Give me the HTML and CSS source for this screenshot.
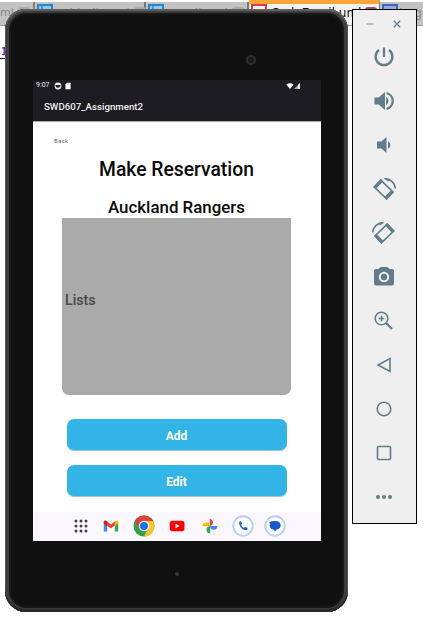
FILE: index.html
```html
<!DOCTYPE html>
<html lang="en">
<head>
<meta charset="utf-8">
<title>SWD607_Assignment2</title>
<link rel="stylesheet" href="styles.css">
</head>
<body>
<div class="editor">
  <div class="tabs">
    <div class="tab first"><span>ml</span><i class="close"></i></div>
    <div class="tab second"><i class="disk"></i><span>AddEdit.uml</span><i class="close"></i></div>
    <div class="tab third"><i class="disk"></i><span>Email.uml</span><i class="close"></i></div>
    <div class="tab active"><i class="disk red"></i><span>CodeEmail.uml</span><i class="close"></i></div>
    <div class="tab last"><i class="disk navy"></i><span>Img</span></div>
  </div>
  <div class="code">1</div>
</div>

<main class="device">
  <i class="camera"></i>
  <section class="screen">
    <header>
      <div class="status">
        <span>9:07</span>
        <svg class="face" viewBox="0 0 8 8"><circle cx="4" cy="4" r="3.4" fill="#eee"/><path d="M1.5 3h5v1a2.5 1.7 0 0 1-5 0z" fill="#25242a"/></svg>
        <svg class="card" viewBox="0 0 6 8"><path d="M2 .8h3.6v6.4H.4V2.5z" fill="#fff"/><path d="M2.3 1.4v1M3.5 1.4v1" stroke="#777" stroke-width=".5"/></svg>
        <svg class="signal" viewBox="0 0 15 8"><path d="M.3 2.6Q4 .1 7.7 2.6L4 7z" fill="#fff"/><path d="M14 1v6H8z" fill="#aaa"/><path d="M14 1v6H12V3z" fill="#eee"/></svg>
      </div>
      <div class="title">SWD607_Assignment2</div>
    </header>
    <div class="content">
      <div class="back">Back</div>
      <h1>Make Reservation</h1>
      <h2>Auckland Rangers</h2>
      <div class="list">Lists</div>
      <button>Add</button>
      <button>Edit</button>
    </div>
    <nav class="dock">
      <svg viewBox="0 0 22 22"><g fill="#414047"><circle cx="6" cy="6" r="1.5"/><circle cx="11" cy="6" r="1.5"/><circle cx="16" cy="6" r="1.5"/><circle cx="6" cy="11" r="1.5"/><circle cx="11" cy="11" r="1.5"/><circle cx="16" cy="11" r="1.5"/><circle cx="6" cy="16" r="1.5"/><circle cx="11" cy="16" r="1.5"/><circle cx="16" cy="16" r="1.5"/></g></svg>
      <svg viewBox="0 0 22 22"><path d="M3.8 7v9.5h3.4V9.4z" fill="#4285f4"/><path d="M14.8 9.4v7.1h3.4V7z" fill="#34a853"/><path d="M3.8 7.2c0-1.8 1.7-2 2.8-1.2L11 9.4 15.4 6v4L11 13.4 3.8 8.5z" fill="#ea4335"/><path d="M14.8 6.5c1.3-1.3 3.4-.8 3.4.8v1.2l-3.4 2.7z" fill="#fbbc04"/><path d="M3.8 7v1.5l3.4 2.7V6.4C5.8 5.4 3.8 5.5 3.8 7z" fill="#c5221f"/></svg>
      <svg viewBox="0 0 22 22"><circle cx="11" cy="11" r="10.5" fill="#34a04c"/><path d="M11 11 6 14 1.9 5.8a10.5 10.5 0 0 1 18.2 0L20 7z" fill="#db4437"/><path d="M11 6h9.2a10.5 10.5 0 0 1-9.3 15.5l4.5-8z" fill="#fbc52c"/><circle cx="11" cy="11" r="5.2" fill="#fff"/><circle cx="11" cy="11" r="4.1" fill="#1a73e8"/></svg>
      <svg viewBox="0 0 22 22"><rect x="3.7" y="5.8" width="14.8" height="10.4" rx="2.8" fill="#f00"/><path d="M9.5 8.7v4.6l4-2.3z" fill="#fff"/></svg>
      <svg viewBox="0 0 22 22"><path d="M10.8 11V3.7a3.7 3.7 0 0 1 0 7.3z" fill="#ea4335"/><path d="M11 11h7.4a3.7 3.7 0 0 1-7.4 0z" fill="#4285f4"/><path d="M11.2 11v7.4a3.7 3.7 0 0 1 0-7.4z" fill="#34a853"/><path d="M11 11.2H3.6a3.7 3.7 0 0 1 7.4 0z" fill="#fbbc04"/></svg>
      <svg viewBox="0 0 22 22"><circle cx="11" cy="11" r="9.7" fill="#fff" stroke="#bdcff0" stroke-width="2"/><path d="M7.2 6.7 9 6.2l1.2 2.6-1.2 1.3q1 2 2.9 2.9l1.4-1.3 2.3 1.3-.5 1.9c-4.3 1.2-8.6-4-7.9-8.2z" fill="#2459c8"/></svg>
      <svg viewBox="0 0 22 22"><circle cx="11" cy="11" r="9.7" fill="#fff" stroke="#bdcff0" stroke-width="2"/><path d="M5 7.4Q7 6 11 6c7.4 0 7.2 8 1.7 8.5L11 16.5l-1.3-2C6 14.5 5 11.2 6.4 9z" fill="#1558d0"/></svg>
    </nav>
  </section>
  <i class="microphone"></i>
</main>

<aside class="controls">
  <div class="window">
    <svg viewBox="0 0 10 10"><path d="M1.5 5h7" stroke="#9aa5aa" stroke-width="1.3"/></svg>
    <svg viewBox="0 0 10 10"><path d="m1.8 1.8 6.4 6.4m0-6.4L1.8 8.2" stroke="#647f8c" stroke-width="1.3"/></svg>
  </div>
  <svg viewBox="0 0 24 24"><path d="M12 2.5V12M7 5a8.4 8.4 0 1 0 10 0" class="line heavy"/></svg>
  <svg viewBox="0 0 24 24"><path d="M2.5 8.5h4.2L13 3v18l-6.3-5.5H2.5z" class="fill"/><path d="M14 7.5q5 4.5 0 9z" class="fill"/><path d="M14.5 4.2a8 8 0 0 1 0 15.6" class="line heavy"/></svg>
  <svg viewBox="0 0 24 24"><path d="M5 8.5h4.3l5.2-4.5v16l-5.2-4.5H5z" class="fill"/><path d="M16 8q5 4 0 8z" class="fill"/></svg>
  <svg viewBox="0 0 24 24"><path d="M8.8 3.2 21 15l-6.5 6.8L2.2 9.9z" class="line"/><path d="m1.3 9.9 7.5-8 2.4 2.4-7.2 7.4zM12.8 19.8l6.4-6.7 2.8 1.9-7.5 8z" class="fill"/><path d="M12.5 1.6A10.5 10.5 0 0 1 23.3 11.5" class="line"/><path d="m12 .8 3.8 3.7 1.7-1.6z" class="fill"/></svg>
  <svg viewBox="0 0 24 24"><path d="M15.2 3.2 3 15l6.5 6.8L21.8 9.9z" class="line"/><path d="m22.7 9.9-7.5-8-2.4 2.4L20 11.7zM11.2 19.8l-6.4-6.7L2 15l7.5 8z" class="fill"/><path d="M11.5 1.6A10.5 10.5 0 0 0 .7 11.5" class="line"/><path d="M12 .8 8.2 4.5 6.5 2.9z" class="fill"/></svg>
  <svg viewBox="0 0 24 24"><path d="M8.5 2h7l2 2H20a2 2 0 0 1 2 2v12.5a2 2 0 0 1-2 2H4a2 2 0 0 1-2-2V6a2 2 0 0 1 2-2h2.5z" class="fill"/><circle cx="12" cy="12" r="4.2" fill="none" stroke="#efefef" stroke-width="2"/></svg>
  <svg viewBox="0 0 24 24"><circle cx="9.5" cy="9.5" r="6.3" class="line"/><path d="m14 14 6 6" class="line heavy"/><path d="M9.5 6.7v5.6M6.7 9.5h5.6" class="line"/></svg>
  <svg viewBox="0 0 24 24"><path d="M18 5.5v13L6 12z" class="line"/></svg>
  <svg viewBox="0 0 24 24"><circle cx="12" cy="12" r="6.8" class="line"/></svg>
  <svg viewBox="0 0 24 24"><rect x="5.5" y="5.5" width="13" height="13" rx="1" class="line"/></svg>
  <svg viewBox="0 0 24 24"><g class="fill"><circle cx="6" cy="12" r="2"/><circle cx="12" cy="12" r="2"/><circle cx="18" cy="12" r="2"/></g></svg>
</aside>
</body>
</html>
```
FILE: styles.css
```css
* { box-sizing: border-box; }
body {
  margin: 0;
  width: 423px;
  height: 619px;
  position: relative;
  overflow: hidden;
  background: #fff;
  font-family: Roboto, sans-serif;
}
.editor { height: 619px; }
.tabs {
  height: 26px;
  display: flex;
  border-bottom: 1px solid #999;
  font: 12px "DejaVu Sans", sans-serif;
}
.tab {
  height: 23px;
  margin-top: 2px;
  flex: none;
  display: flex;
  gap: 4px;
  padding: 2px 2px 0;
  background: #c2c2c2;
  border-right: 2px solid #777;
  color: #888;
  white-space: nowrap;
}
.tab span { margin-top: 3px; }
.first { width: 35px; padding: 2px 0 0; border-right-color: #9c7777; }
.first span { font-size: 11px; margin-top: 2px; }
.second { width: 111px; }
.third { width: 103px; }
.active {
  width: 131px;
  height: 25px;
  margin-top: 0;
  padding-top: 4px;
  border-top: 4px solid #f8a636;
  border-right-width: 1px;
  background: #f2f2f2;
  color: #111;
}
.active span { margin-top: -2px; }
.active .disk { margin-top: -4px; }
.active .close { margin: -1px 4px 0 auto; }
.last { width: 43px; gap: 1px; padding-right: 0; border: 0; }
.last span { font-size: 12px; margin-top: 2px; }
.disk {
  flex: none;
  width: 16px;
  height: 16px;
  border: 2px solid #2584d0;
  background: linear-gradient(90deg, transparent 2px, #4b95d2 2px 4px, transparent 4px), #91c9f6;
}
.red { border-color: #e23840; background: #fff1f0; }
.navy { border-color: #4065b6; background: #91ace0; }
.close {
  flex: none;
  width: 12px;
  height: 12px;
  margin: 3px 4px 0 auto;
  border: 2px solid #aaa;
  border-radius: 3px;
}
.active .close { border-color: #a4505c; }
.code {
  width: 10px;
  height: 33px;
  padding: 20px 0 0 1px;
  border-bottom: 1px solid #111;
  color: #6b24b4;
  font: bold 10px/12px "DejaVu Sans Mono", monospace;
}
.device {
  position: absolute;
  left: 5px;
  top: 9px;
  width: 343px;
  height: 603px;
  padding: 71px 27px 0 28px;
  border-radius: 21px;
  background: #101010;
  box-shadow: inset 0 2px 0 #606060, inset 0 -3px 0 #292929, inset 0 0 0 1px #555, inset 0 0 0 4px #3c3c3c, inset 0 0 0 6px #181818;
}
.camera {
  position: absolute;
  left: 241px;
  top: 46px;
  width: 10px;
  height: 10px;
  border: 2px solid #303030;
  border-radius: 50%;
  background: #181818;
}
.microphone {
  position: absolute;
  left: 170px;
  top: 563px;
  width: 4px;
  height: 4px;
  border-radius: 50%;
  background: #393939;
}
.screen {
  width: 288px;
  height: 461px;
  display: flex;
  flex-direction: column;
  background: #fff;
}
header {
  height: 42px;
  background: #1d1c22;
  border-bottom: 1px solid #aaa;
  color: #eee;
}
.status {
  height: 11px;
  padding: 0 20px 0 3px;
  display: flex;
  align-items: center;
  font-size: 7px;
  line-height: 11px;
}
.face { width: 8px; height: 8px; margin-left: 4px; }
.card { width: 6px; height: 8px; margin-left: 3px; }
.signal { width: 15px; height: 8px; margin-left: auto; }
.title {
  padding: 9px 11px;
  font-size: 9.7px;
  font-weight: 500;
  line-height: 14px;
}
.content {
  flex: 1;
  display: flex;
  flex-direction: column;
  align-items: center;
  padding-right: 1px;
}
.back {
  align-self: flex-start;
  margin: 15px 0 0 21px;
  font-size: 6px;
  line-height: 8px;
  letter-spacing: .3px;
  color: #666;
}
h1, h2 { margin: 0; font-weight: 500; color: #080808; text-align: center; }
h1 { margin-top: 13px; font-size: 19.3px; line-height: 24px; }
h2 { margin-top: 14px; font-size: 16.9px; line-height: 22px; }
.list {
  width: 229px;
  height: 177px;
  margin-bottom: 10px;
  padding: 73px 3px 0;
  border-radius: 0 0 7px 7px;
  background: #aaa;
  color: #484848;
  font-size: 14.2px;
  font-weight: 500;
  line-height: 18px;
}
button {
  width: 220px;
  height: 32px;
  margin: 14px 0 0;
  padding: 2px 0 0;
  border: 0;
  border-bottom: 1px solid #9ac7da;
  border-radius: 7px;
  background: #32b4e7;
  color: #fff;
  font: 700 12px Roboto, sans-serif;
}
.dock {
  height: 29px;
  padding: 0 35px 1px 37px;
  display: flex;
  align-items: center;
  justify-content: space-between;
  background: #faf7fe;
}
.dock svg { width: 22px; height: 22px; }
.dock svg:nth-child(2) { margin: 0 2px 0 -2px; }
.dock svg:nth-child(3) { margin: 0 2px 0 -2px; }
.dock svg:nth-child(4) { margin: 0 1px 0 -1px; }
.controls {
  position: absolute;
  left: 352px;
  top: 9px;
  width: 65px;
  height: 515px;
  padding-right: 2px;
  display: flex;
  flex-direction: column;
  align-items: center;
  gap: 20px;
  border: 1px solid #000;
  background: #efefef;
}
.controls > svg { width: 24px; height: 24px; flex: none; }
.window {
  width: 37px;
  height: 10px;
  margin: 9px 0 -4px;
  display: flex;
  justify-content: space-between;
}
.window svg { width: 10px; height: 10px; }
.line { fill: none; stroke: #617d8a; stroke-width: 1.6; }
.heavy { stroke-width: 2.3; }
.fill { fill: #617d8a; }
```
